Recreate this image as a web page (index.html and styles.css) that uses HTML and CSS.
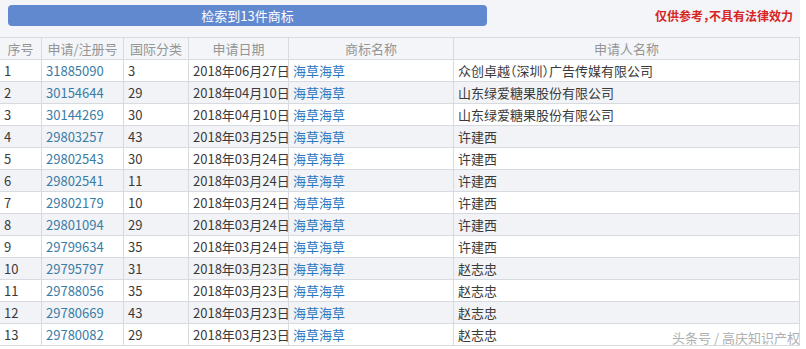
FILE: index.html
```html
<!DOCTYPE html>
<html lang="zh-CN">
<head>
<meta charset="utf-8">
<title>检索结果</title>
<link rel="stylesheet" href="styles.css">
</head>
<body>
<div class="page">
  <div class="topbar">
    <div class="count-bar">检索到13件商标</div>
    <div class="notice">仅供参考，不具有法律效力</div>
  </div>
  <table class="results">
    <colgroup>
      <col class="c-no"><col class="c-reg"><col class="c-cls"><col class="c-date"><col class="c-name"><col class="c-app">
    </colgroup>
    <thead>
      <tr><th>序号</th><th>申请/注册号</th><th>国际分类</th><th>申请日期</th><th>商标名称</th><th>申请人名称</th></tr>
    </thead>
    <tbody>
      <tr><td>1</td><td class="num">31885090</td><td>3</td><td>2018年06月27日</td><td class="mark">海草海草</td><td class="tight">众创卓越（深圳）广告传媒有限公司</td></tr>
      <tr><td>2</td><td class="num">30154644</td><td>29</td><td>2018年04月10日</td><td class="mark">海草海草</td><td>山东绿爱糖果股份有限公司</td></tr>
      <tr><td>3</td><td class="num">30144269</td><td>30</td><td>2018年04月10日</td><td class="mark">海草海草</td><td>山东绿爱糖果股份有限公司</td></tr>
      <tr><td>4</td><td class="num">29803257</td><td>43</td><td>2018年03月25日</td><td class="mark">海草海草</td><td>许建西</td></tr>
      <tr><td>5</td><td class="num">29802543</td><td>30</td><td>2018年03月24日</td><td class="mark">海草海草</td><td>许建西</td></tr>
      <tr><td>6</td><td class="num">29802541</td><td>11</td><td>2018年03月24日</td><td class="mark">海草海草</td><td>许建西</td></tr>
      <tr><td>7</td><td class="num">29802179</td><td>10</td><td>2018年03月24日</td><td class="mark">海草海草</td><td>许建西</td></tr>
      <tr><td>8</td><td class="num">29801094</td><td>29</td><td>2018年03月24日</td><td class="mark">海草海草</td><td>许建西</td></tr>
      <tr><td>9</td><td class="num">29799634</td><td>35</td><td>2018年03月24日</td><td class="mark">海草海草</td><td>许建西</td></tr>
      <tr><td>10</td><td class="num">29795797</td><td>31</td><td>2018年03月23日</td><td class="mark">海草海草</td><td>赵志忠</td></tr>
      <tr><td>11</td><td class="num">29788056</td><td>35</td><td>2018年03月23日</td><td class="mark">海草海草</td><td>赵志忠</td></tr>
      <tr><td>12</td><td class="num">29780669</td><td>43</td><td>2018年03月23日</td><td class="mark">海草海草</td><td>赵志忠</td></tr>
      <tr><td>13</td><td class="num">29780082</td><td>29</td><td>2018年03月23日</td><td class="mark">海草海草</td><td>赵志忠</td></tr>
    </tbody>
  </table>
  <div class="watermark">头条号 / 高庆知识产权</div>
</div>
</body>
</html>
```

FILE: styles.css
```css
html, body {
  margin: 0;
  padding: 0;
  background: #ffffff;
}
body {
  font-family: "Noto Sans CJK SC", "Microsoft YaHei", sans-serif;
  font-size: 13px;
  color: #3a3a3a;
  width: 806px;
  height: 349px;
  overflow: hidden;
}
.page {
  position: relative;
  width: 806px;
  height: 349px;
  background: #ffffff;
}
.topbar {
  height: 37px;
  background: #f3f5f9;
  display: flex;
  align-items: flex-start;
  justify-content: space-between;
  padding: 5px 7px 0 8px;
  box-sizing: border-box;
  width: 800px;
}
.count-bar {
  width: 479px;
  height: 21px;
  line-height: 21px;
  background: #6189cf;
  border-radius: 4px;
  color: #ffffff;
  text-align: center;
  font-size: 13px;
}
.notice {
  color: #d7261f;
  font-weight: bold;
  font-size: 12px;
  line-height: 22px;
  font-feature-settings: "halt";
}
.results {
  border-collapse: collapse;
  table-layout: fixed;
  width: 800px;
  margin-left: -1px;
}
.c-no { width: 42px; }
.c-reg { width: 82px; }
.c-cls { width: 65px; }
.c-date { width: 100px; }
.c-name { width: 165px; }
.c-app { width: 346px; }
.results th, .results td {
  border: 1px solid #d7dbe0;
  height: 21px;
  padding: 0 4px;
  white-space: nowrap;
  overflow: hidden;
  line-height: 20px;
}
.results th {
  background: #f3f5f9;
  color: #959595;
  font-weight: normal;
  text-align: center;
}
.results td {
  text-align: left;
}
.results tbody tr:nth-child(even) td {
  background: #f1f3f7;
}
.results td.num {
  color: #3a7ca6;
}
.results td.mark {
  color: #2a78c0;
}
.results td.tight {
  font-feature-settings: "halt";
}
.watermark {
  position: absolute;
  right: 6px;
  bottom: 2px;
  color: #b0b0b0;
  font-size: 13px;
  text-shadow: 0 0 1px #ffffff;
}
```
